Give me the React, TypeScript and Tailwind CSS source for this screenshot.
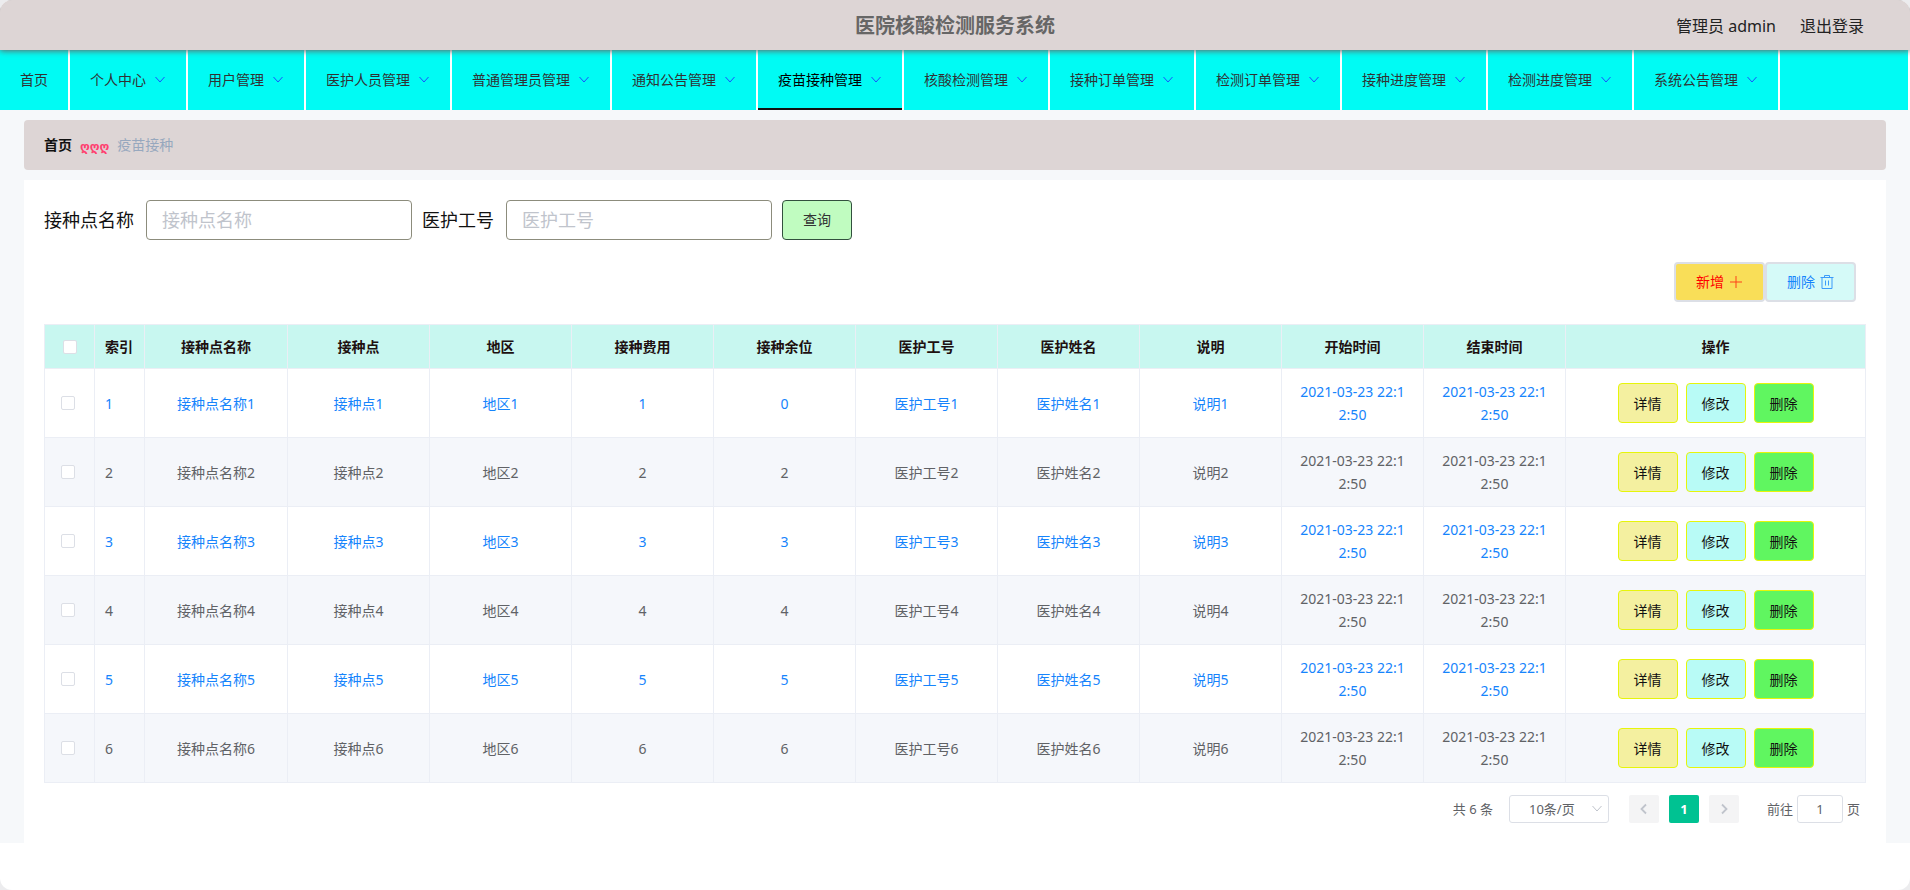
import React, { useState } from 'react';

const menus = [
    '个人中心',
    '用户管理',
    '医护人员管理',
    '普通管理员管理',
    '通知公告管理',
    '疫苗接种管理',
    '核酸检测管理',
    '接种订单管理',
    '检测订单管理',
    '接种进度管理',
    '检测进度管理',
    '系统公告管理',
];

const columns = ['接种点名称', '接种点', '地区', '接种费用', '接种余位', '医护工号', '医护姓名', '说明'];

const rows = [1, 2, 3, 4, 5, 6].map((n) => ({
    id: n,
    cells: [
        `接种点名称${n}`,
        `接种点${n}`,
        `地区${n}`,
        `${n}`,
        n === 1 ? '0' : `${n}`,
        `医护工号${n}`,
        `医护姓名${n}`,
        `说明${n}`,
    ],
}));

export default function App(): React.JSX.Element {
    return (
        <div className="min-h-screen bg-[#ececee] font-['Noto_Sans','Noto_Sans_CJK_SC',sans-serif] text-sm text-[#606266]">
            <div className="min-h-screen overflow-hidden rounded-xl bg-white">
                <Header />
                <NavBar active="疫苗接种管理" />
                <main className="bg-[#f6f8fa] px-6 pt-2.5">
                    <Breadcrumb />
                    <section className="mt-2.5 bg-white p-5">
                        <SearchForm />
                        <Toolbar />
                        <DataTable />
                        <Pagination />
                    </section>
                </main>
            </div>
        </div>
    );
}

function Header(): React.JSX.Element {
    return (
        <header className="relative z-10 grid h-[50px] grid-cols-3 items-center bg-[#ddd5d5] px-[46px] pt-0.5 shadow-[0_1px_6px_#666]">
            <h1 className="col-start-2 text-center text-xl font-bold text-[#666]">医院核酸检测服务系统</h1>
            <div className="flex justify-end gap-6 text-base text-[#222]">
                <span>管理员 admin</span>
                <a href="#logout">退出登录</a>
            </div>
        </header>
    );
}

function NavBar(props: { active: string }): React.JSX.Element {
    return (
        <nav className="mr-0.5 flex h-[60px] bg-[#00fbf4] text-[#303133]">
            <a href="#home" className="flex items-center border-r-2 border-white px-5">
                首页
            </a>
            {menus.map((name) => (
                <a
                    key={name}
                    href="#menu"
                    className={
                        'flex items-center gap-2 border-r-2 border-white px-5 whitespace-nowrap ' +
                        (name === props.active ? 'text-black shadow-[inset_0_-2px_0_#111]' : '')
                    }
                >
                    {name}
                    <Chevron className="size-3 text-[#1a4fff]" />
                </a>
            ))}
        </nav>
    );
}

function Chevron(props: { className: string }): React.JSX.Element {
    return (
        <svg viewBox="0 0 12 12" fill="none" stroke="currentColor" className={props.className}>
            <path d="M1.5 3 6 8l4.5-5" />
        </svg>
    );
}

function Breadcrumb(): React.JSX.Element {
    return (
        <div className="flex h-[50px] items-center gap-2 rounded bg-[#ddd5d5] px-5">
            <a href="#home" className="font-bold text-[#111]">
                首页
            </a>
            <span className="pt-1 font-['DejaVu_Sans',sans-serif] text-xs font-bold text-[#ff4070]">ღღღ</span>
            <span className="text-[#97a8be]">疫苗接种</span>
        </div>
    );
}

function SearchForm(): React.JSX.Element {
    const field =
        'h-10 w-[266px] rounded border border-[#8c8c7c] bg-white px-[15px] text-lg outline-none placeholder:text-[#c0c4cc]';
    return (
        <form className="flex items-center gap-2.5 text-lg text-[#111]">
            <label className="flex items-center gap-3">
                接种点名称
                <input className={field} placeholder="接种点名称" />
            </label>
            <label className="flex items-center gap-3">
                医护工号
                <input className={field} placeholder="医护工号" />
            </label>
            <button type="button" className="h-10 rounded border border-[#32503e] bg-[#c0fcc0] px-5 text-sm text-[#333]">
                查询
            </button>
        </form>
    );
}

function Toolbar(): React.JSX.Element {
    return (
        <div className="mt-[22px] flex justify-end pr-2.5">
            <button className="flex h-10 items-center gap-[5px] rounded border-2 border-[#dcdfe6] bg-[#f9de58] px-5 text-[#f00]">
                新增
                <svg viewBox="0 0 14 14" fill="none" stroke="currentColor" className="size-3.5 opacity-70">
                    <path d="M7 1v12M1 7h12" />
                </svg>
            </button>
            <button className="flex h-10 items-center gap-[5px] rounded border-2 border-[#dcdfe6] bg-[#d5faf8] px-5 text-[#1684fc]">
                删除
                <svg viewBox="0 0 14 14" fill="none" stroke="currentColor" className="size-3.5 opacity-80">
                    <path d="M.5 2.500h13M2 2.500v11h10v-11M4.500 2.500v-2h5v2M5.500 5.500v5M8.500 5.500v5" />
                </svg>
            </button>
        </div>
    );
}

function DataTable(): React.JSX.Element {
    const [selected, setSelected] = useState<number[]>([]);

    const toggle = (id: number) => {
        setSelected(selected.includes(id) ? selected.filter((s) => s !== id) : [...selected, id]);
    };

    const box =
        'block size-3.5 appearance-none rounded-xs border border-[#dcdfe6] bg-white checked:bg-[#409eff]';
    const button = 'h-10 rounded border border-[#e6f50a] px-[15px]';

    return (
        <table className="mt-[22px] w-full table-fixed border-separate border-spacing-0 border-t border-l border-[#ebeef5] text-center [&_td]:border-r [&_td]:border-b [&_td]:border-[#ebeef5] [&_th]:border-r [&_th]:border-b [&_th]:border-[#ebeef5]">
            <thead>
                <tr className="h-11 bg-[#c8f7f0] text-[#201010]">
                    <th className="w-[50px]">
                        <input
                            type="checkbox"
                            aria-label="全选"
                            className={box + ' mx-auto'}
                            checked={selected.length === rows.length}
                            onChange={(e) => setSelected(e.target.checked ? rows.map((r) => r.id) : [])}
                        />
                    </th>
                    <th className="w-[50px] pl-2.5 text-left">索引</th>
                    {columns.map((c) => (
                        <th key={c} className="first-of-type:w-[50px] nth-3:w-[143px]">
                            {c}
                        </th>
                    ))}
                    <th>开始时间</th>
                    <th>结束时间</th>
                    <th className="w-[300px]">操作</th>
                </tr>
            </thead>
            <tbody>
                {rows.map((row) => (
                    <tr key={row.id} className="h-[69px] leading-[23px] odd:text-[#1684fc] even:bg-[#f5f7fb]">
                        <td>
                            <input
                                type="checkbox"
                                aria-label={`选择${row.id}`}
                                className={box + ' ml-4'}
                                checked={selected.includes(row.id)}
                                onChange={() => toggle(row.id)}
                            />
                        </td>
                        <td className="pl-2.5 text-left">{row.id}</td>
                        {row.cells.map((cell, i) => (
                            <td key={i}>{cell}</td>
                        ))}
                        <DateCell />
                        <DateCell />
                        <td>
                            <div className="flex justify-center gap-2 text-[#111]">
                                <button className={button + ' bg-[#f4f0a0]'}>详情</button>
                                <button className={button + ' bg-[#b8fbf6]'}>修改</button>
                                <button className={button + ' bg-[#60f660]'}>删除</button>
                            </div>
                        </td>
                    </tr>
                ))}
            </tbody>
        </table>
    );
}

function DateCell(): React.JSX.Element {
    return (
        <td>
            2021-03-23 22:1
            <br />
            2:50
        </td>
    );
}

function Pagination(): React.JSX.Element {
    return (
        <div className="mt-3 flex h-7 items-center justify-end pr-1.5 text-[13px]">
            <span className="mr-4">共 6 条</span>
            <div className="relative mr-5">
                <select
                    aria-label="每页条数"
                    className="h-7 w-[100px] appearance-none rounded-[3px] border border-[#dcdfe6] bg-white pl-[19px]"
                >
                    <option>10条/页</option>
                </select>
                <Chevron className="pointer-events-none absolute top-2 right-1.5 size-3 text-[#c0c4cc]" />
            </div>
            <div className="mr-7 flex gap-2.5">
                <button aria-label="上一页" className="flex h-7 w-[30px] items-center justify-center rounded-xs bg-[#f4f4f5] text-[#c0c4cc]">
                    <svg viewBox="0 0 12 12" fill="none" stroke="currentColor" strokeWidth="1.8" className="size-3">
                        <path d="M8 1.500 3.500 6 8 10.500" />
                    </svg>
                </button>
                <button className="h-7 w-[30px] rounded-xs bg-[#00c292] font-bold text-white">1</button>
                <button aria-label="下一页" className="flex h-7 w-[30px] items-center justify-center rounded-xs bg-[#f4f4f5] text-[#c0c4cc]">
                    <svg viewBox="0 0 12 12" fill="none" stroke="currentColor" strokeWidth="1.8" className="size-3">
                        <path d="M4 1.500 8.500 6 4 10.500" />
                    </svg>
                </button>
            </div>
            <label className="flex items-center gap-1">
                前往
                <input className="h-7 w-[46px] rounded-[3px] border border-[#dcdfe6] text-center" defaultValue="1" />
                页
            </label>
        </div>
    );
}
